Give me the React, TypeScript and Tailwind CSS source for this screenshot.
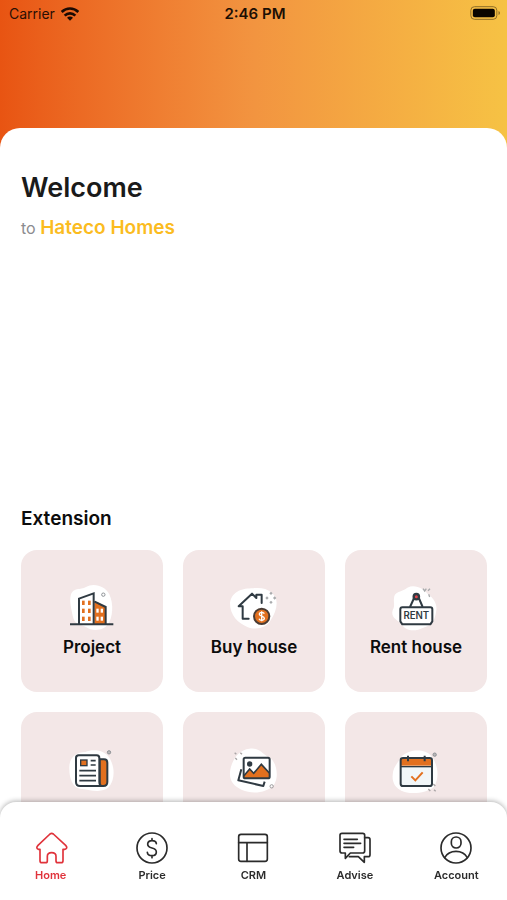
import type { ReactNode } from "react";

const INK = "#2f3a42";
const ORANGE = "#e2701f";

function WifiIcon() {
  return (
    <svg viewBox="0 0 54 42" className="h-3.5 w-[18px]" aria-hidden="true" fill="none" stroke="#1c0a03" strokeWidth="8">
      <path d="M2 15C16 1 38 1 52 15" />
      <path d="M11 26c9-9 23-9 32 0" />
      <path d="M18 32c5-5 13-5 18 0l-9 9z" fill="#1c0a03" stroke="none" />
    </svg>
  );
}

function BatteryIcon() {
  return (
    <svg viewBox="0 0 92 42" className="h-3.5 w-[31px]" aria-hidden="true">
      <rect x="2" y="2" width="78" height="38" rx="11" fill="none" stroke="#8f6f28" strokeWidth="3" />
      <rect x="8" y="8" width="66" height="26" rx="6" fill="#0a0500" />
      <path d="M85 15c6 2 6 10 0 12z" fill="#8f6f28" />
    </svg>
  );
}

function ProjectIcon() {
  return (
    <svg viewBox="0 0 192 180" className="h-[60px] w-16" aria-hidden="true">
      <path d="M32 62C38 36 62 46 78 36C100 22 136 32 148 58C162 88 158 128 144 148C130 168 96 170 78 156C58 146 44 150 38 122C34 100 28 80 32 62Z" fill="#fff" />
      <path d="M103 84l10-2 24 14v52h-34z" fill={ORANGE} />
      <path d="M57 147V71l44-16v92M104 80l33 16v51" fill="none" stroke={INK} strokeWidth="6" />
      <path d="M30 148h130" stroke={INK} strokeWidth="6" />
      <g fill={ORANGE}>
        <rect x="66" y="77" width="8" height="13" /><rect x="84" y="77" width="8" height="13" />
        <rect x="66" y="101" width="8" height="13" /><rect x="84" y="101" width="8" height="13" />
        <rect x="66" y="125" width="8" height="13" /><rect x="84" y="125" width="8" height="13" />
      </g>
      <g fill="#fff">
        <rect x="109" y="101" width="7" height="12" /><rect x="122" y="101" width="7" height="12" />
        <rect x="109" y="125" width="7" height="12" /><rect x="122" y="125" width="7" height="12" />
      </g>
      <circle cx="130" cy="59" r="5" fill="none" stroke="#8d9195" strokeWidth="3" />
    </svg>
  );
}

function BuyHouseIcon() {
  return (
    <svg viewBox="0 0 192 180" className="h-[60px] w-16" aria-hidden="true">
      <path d="M24 84C30 48 62 40 94 40C132 34 164 54 164 84C164 102 156 120 146 136C134 160 100 166 76 156C48 144 24 122 24 84Z" fill="#fff" />
      <path d="M80 131H62V94H50L90 56l13 13V59h16v25M80 131h-6" fill="none" stroke={INK} strokeWidth="6" strokeLinejoin="round" strokeLinecap="round" />
      <circle cx="119" cy="124" r="23" fill={ORANGE} stroke="#4a3c35" strokeWidth="6" />
      <path d="M127 116c-3-6-16-5-15 2c1 7 15 4 15 12c0 7-13 8-16 1M119 109v30" fill="none" stroke="#fff" strokeWidth="4" />
      <g fill="#a9abad">
        <path d="M147 50l5 5-5 5-5-5zM135 64l5 5-5 5-5-5zM158 64l5 5-5 5-5-5zM147 77l5 5-5 5-5-5z" />
      </g>
    </svg>
  );
}

function RentHouseIcon() {
  return (
    <svg viewBox="0 0 192 180" className="h-[60px] w-16" aria-hidden="true">
      <path d="M30 70C30 48 54 52 70 38C94 26 120 42 132 58C150 70 162 90 156 112C152 138 142 152 118 158C94 170 66 170 52 146C36 134 20 126 26 106C34 92 28 84 30 70Z" fill="#fff" />
      <path d="M78 96l15-33M116 96l-14-33" stroke={INK} strokeWidth="6" />
      <circle cx="97" cy="65" r="8" fill="#e0444b" stroke={INK} strokeWidth="7" />
      <path d="M55 97h84q6 0 6 6v36l-6 9H55l-6-9v-36q0-6 6-6z" fill="#fff" stroke={INK} strokeWidth="6" strokeLinejoin="round" />
      <text x="97" y="133" textAnchor="middle" fontSize="29" fontWeight="600" fill={INK} className="font-['Inter',sans-serif]">RENT</text>
      <path d="M117 41l5 7 5-7M132 47l6-6M134 58l3 8" fill="none" stroke="#a9abad" strokeWidth="4" />
    </svg>
  );
}

function NewsIcon() {
  return (
    <svg viewBox="0 -9 192 180" className="h-[60px] w-16" aria-hidden="true">
      <path d="M28 86C26 54 48 36 76 36C98 26 134 28 150 56C166 86 164 120 146 142C124 162 86 148 60 146C38 142 28 116 28 86Z" fill="#fff" />
      <path d="M119 58h13q10 0 10 10v58q0 12-12 12h-11z" fill={ORANGE} stroke={INK} strokeWidth="6" />
      <path d="M56 46h54q8 0 8 8v72q0 12 9 12H60q-12 0-12-12V54q0-8 8-8z" fill="#fff" stroke={INK} strokeWidth="6" strokeLinejoin="round" />
      <rect x="62" y="60" width="19" height="17" fill={ORANGE} stroke={INK} strokeWidth="4" />
      <path d="M92 62h15M92 75h15M58 92h50M58 107h50M58 122h50" stroke={INK} strokeWidth="5" />
      <circle cx="147" cy="37" r="5" fill="#b9b7b8" stroke="#8d9195" strokeWidth="3" />
    </svg>
  );
}

function GalleryIcon() {
  return (
    <svg viewBox="0 -9 192 180" className="h-[60px] w-16" aria-hidden="true">
      <path d="M24 96C28 62 48 30 82 26C112 20 126 48 148 56C166 76 170 114 156 134C136 158 92 164 60 150C36 138 22 124 24 96Z" fill="#fff" />
      <path d="M58 88l-9 33 75 17 4-13" fill="none" stroke={INK} strokeWidth="6" strokeLinejoin="round" />
      <path d="M66 108l17-21 12 13 23-27 24 26v15H66z" fill={ORANGE} />
      <path d="M66 107l17-20 12 13 23-27 24 26" fill="none" stroke={INK} strokeWidth="5" />
      <rect x="65" y="53" width="78" height="62" rx="5" fill="none" stroke={INK} strokeWidth="6" />
      <circle cx="83" cy="72" r="8" fill={INK} />
      <circle cx="149" cy="139" r="5" fill="none" stroke="#9b9b9d" strokeWidth="3" />
      <path d="M38 38l5 5M55 38l5 5M40 54l5 5" stroke="#a9a5a6" strokeWidth="4" />
    </svg>
  );
}

function ScheduleIcon() {
  return (
    <svg viewBox="0 -9 192 180" className="h-[60px] w-16" aria-hidden="true">
      <path d="M26 106C26 84 40 70 54 48C76 26 124 26 140 46C162 72 168 112 150 140C130 158 80 166 52 152C34 144 24 126 26 106Z" fill="#fff" />
      <rect x="50" y="54" width="94" height="84" rx="6" fill="#f1f6f8" />
      <path d="M50 54h94v23H50z" fill={ORANGE} />
      <path d="M51 80h92" stroke={INK} strokeWidth="4" />
      <rect x="50" y="54" width="94" height="84" rx="7" fill="none" stroke={INK} strokeWidth="6" />
      <path d="M72 47v17M122 47v17" stroke={INK} strokeWidth="6" />
      <path d="M82 109l12 12 22-24" fill="none" stroke={ORANGE} strokeWidth="6" />
      <circle cx="152" cy="44" r="5" fill="#b9b7b8" stroke="#8d9195" strokeWidth="3" />
      <path d="M148 132l6 6M133 147l6 6M150 149l5 5" stroke="#a9a5a6" strokeWidth="4" />
    </svg>
  );
}

function NavIcon({ children }: { children: ReactNode }) {
  return (
    <svg
      viewBox="0 0 102 102"
      className="size-[34px]"
      aria-hidden="true"
      fill="none"
      stroke="currentColor"
      strokeWidth="5"
      strokeLinecap="round"
      strokeLinejoin="round"
    >
      {children}
    </svg>
  );
}

const extensions = [
  { name: "Project", icon: <ProjectIcon />, label: true },
  { name: "Buy house", icon: <BuyHouseIcon />, label: true },
  { name: "Rent house", icon: <RentHouseIcon />, label: true },
  { name: "News", icon: <NewsIcon />, label: false },
  { name: "Gallery", icon: <GalleryIcon />, label: false },
  { name: "Schedule", icon: <ScheduleIcon />, label: false },
];

const tabs = [
  {
    name: "Home",
    icon: <path d="M48 9q5-4 10 0l37 34q8 9-3 12h-5v34q0 6-6 6H71q-5 0-5-6V76q0-11-13-11t-13 11v13q0 6-5 6H24q-6 0-6-6V55h-4q-10-3-2-12z" />,
  },
  {
    name: "Price",
    icon: (
      <>
        <circle cx="51" cy="51" r="45" />
        <path d="M64 38q-1-9-13-9t-13 10q0 9 13 12t13 12q0 11-13 11T37 64M51 23v6M51 74v6" />
      </>
    ),
  },
  {
    name: "CRM",
    icon: (
      <>
        <rect x="8" y="10" width="86" height="81" rx="7" />
        <path d="M8 35h86M33 35v56" />
      </>
    ),
  },
  {
    name: "Advise",
    icon: (
      <>
        <path d="M12 7h62q6 0 6 6v47q0 6-6 6H37L22 82V66H12q-6 0-6-6V13q0-6 6-6zM18 25h40M18 37h50M18 49h29" />
        <path d="M80 20h10q6 0 6 6v45q0 6-6 6H79v17L61 77H34" />
      </>
    ),
  },
  {
    name: "Account",
    icon: (
      <>
        <circle cx="51" cy="51" r="45" />
        <rect x="37" y="18" width="29" height="33" rx="14" />
        <path d="M17 80c14-25 54-25 68 0" />
      </>
    ),
  },
];

export default function App() {
  return (
    <div className="flex h-screen flex-col overflow-hidden bg-white font-['Inter','Liberation_Sans',sans-serif]">
      <div className="min-h-0 flex-1 overflow-y-auto [scrollbar-width:none]">
        <div className="bg-linear-to-r from-[#e85412] via-[#f29440] to-[#f6c244]">
          <header className="grid h-32 grid-cols-3 items-start pt-1 pr-1.5 pl-[9px] text-sm leading-5 text-[#2a0f04]">
            <div className="flex items-center gap-1.5">
              <span>Carrier</span>
              <WifiIcon />
            </div>
            <time className="text-center text-[15px] font-semibold text-[#1c0f04]">2:46 PM</time>
            <div className="flex h-[18px] items-center justify-end">
              <BatteryIcon />
            </div>
          </header>
          <main className="rounded-t-[20px] bg-white pt-10 pr-5 pb-5 pl-[21px]">
            <h1 className="text-[27px] leading-10 font-semibold text-[#1a1a1a]">Welcome</h1>
            <p className="text-base leading-10 text-[#8b8b8f]">
              to <span className="text-[19px] font-semibold text-[#fbbc1f]">Hateco Homes</span>
            </p>
            <section className="pt-64">
              <h2 className="text-[19px] leading-[30px] font-semibold text-[#0c0c0c]">Extension</h2>
              <div className="grid grid-cols-3 gap-5 pt-4">
                {extensions.map((item) => (
                  <button
                    key={item.name}
                    type="button"
                    aria-label={item.name}
                    className="flex aspect-square flex-col items-center rounded-2xl bg-[#f3e7e7] pt-[25px] text-[17px] leading-6 font-semibold text-[#0c0c0c]"
                  >
                    {item.icon}
                    {item.label && <span>{item.name}</span>}
                  </button>
                ))}
              </div>
            </section>
          </main>
        </div>
      </div>
      <nav
        aria-label="Main"
        className="relative grid grid-cols-5 rounded-t-2xl bg-white pt-[29px] pb-[17px] shadow-[0_-1px_5px_rgba(0,0,0,0.3)]"
      >
        {tabs.map((tab, index) => (
          <a
            key={tab.name}
            href={`#${tab.name.toLowerCase()}`}
            aria-current={index === 0 ? "page" : undefined}
            className="flex flex-col items-center gap-0.5 text-[11px] leading-4 font-semibold text-[#2b2b2b] aria-[current=page]:text-[#e0333b]"
          >
            <NavIcon>{tab.icon}</NavIcon>
            {tab.name}
          </a>
        ))}
      </nav>
    </div>
  );
}
